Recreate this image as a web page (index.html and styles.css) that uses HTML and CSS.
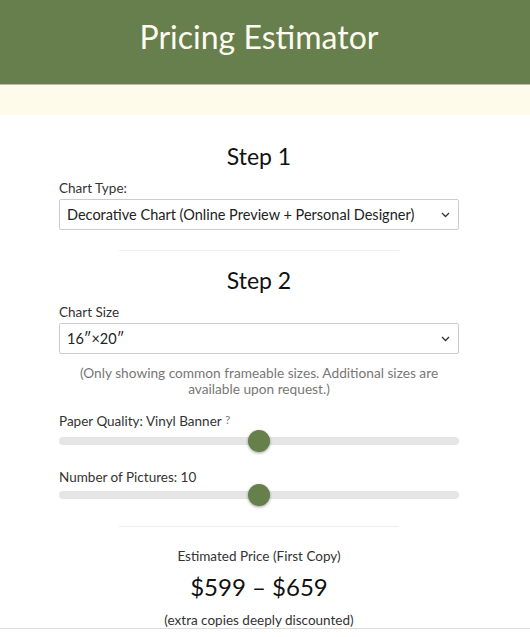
FILE: index.html
```html
<!DOCTYPE html>
<html>
<head>
    <meta charset="UTF-8">
    <meta name="viewport" content="width=device-width, initial-scale=1.0">
    <title>Pricing Estimator</title>
    <link rel="stylesheet" href="styles.css">
</head>
<body>
    <header class="banner">
        <h1>Pricing Estimator</h1>
    </header>
    <div class="notice"></div>

    <main class="estimator">
        <section class="step">
            <h2>Step 1</h2>
            <label class="field-label" for="chart-type">Chart Type:</label>
            <div class="select-wrap">
                <select id="chart-type">
                    <option>Decorative Chart (Online Preview + Personal Designer)</option>
                    <option>Basic Chart</option>
                </select>
                <svg class="chevron" width="9" height="6" viewBox="0 0 9 6"><path d="M1 1l3.5 3.5L8 1" fill="none" stroke="#333" stroke-width="1.3"/></svg>
            </div>
        </section>

        <hr class="divider">

        <section class="step">
            <h2 class="step-two">Step 2</h2>
            <label class="field-label" for="chart-size">Chart Size</label>
            <div class="select-wrap">
                <select id="chart-size">
                    <option>16″×20″</option>
                    <option>18″×24″</option>
                    <option>24″×36″</option>
                </select>
                <svg class="chevron" width="9" height="6" viewBox="0 0 9 6"><path d="M1 1l3.5 3.5L8 1" fill="none" stroke="#333" stroke-width="1.3"/></svg>
            </div>
            <p class="note">(Only showing common frameable sizes. Additional sizes are available upon request.)</p>

            <div class="slider">
                <label class="field-label" for="paper">Paper Quality: <span id="paper-name">Vinyl Banner</span> <span class="help">?</span></label>
                <input type="range" id="paper" min="0" max="4" value="2">
            </div>

            <div class="slider second">
                <label class="field-label" for="pictures">Number of Pictures: <span id="pictures-count">10</span></label>
                <input type="range" id="pictures" min="0" max="20" value="10">
            </div>
        </section>

        <hr class="divider lower">

        <section class="result">
            <div class="result-label">Estimated Price (First Copy)</div>
            <div class="price">$599 – $659</div>
            <div class="result-note">(extra copies deeply discounted)</div>
        </section>
    </main>
    <div class="footer-line"></div>
</body>
</html>
```

FILE: styles.css
```css
* {
    margin: 0;
    padding: 0;
    box-sizing: border-box;
}

body {
    font-family: 'Lato', 'Liberation Sans', sans-serif;
    color: #222;
    background: #fff;
}

.banner {
    height: 85px;
    background: #677e4d;
    border-bottom: 1px solid #c8b9a6;
    padding-right: 12px;
    display: flex;
    justify-content: center;
    align-items: center;
}

.banner h1 {
    color: #fdfbef;
    font-weight: 400;
    font-size: 32px;
    padding-bottom: 12px;
}

.notice {
    height: 30px;
    background: #fffbeb;
}

.estimator {
    width: 400px;
    margin-left: 59px;
}

.step h2 {
    text-align: center;
    font-weight: 400;
    font-size: 23px;
    color: #111;
    margin-top: 27px;
    line-height: 28px;
}

.step h2.step-two {
    margin-top: 15px;
}

.field-label {
    display: block;
    font-size: 13.5px;
    color: #333;
    margin-top: 9px;
    line-height: 18px;
}

.select-wrap {
    position: relative;
    margin-top: 2px;
}

.select-wrap select {
    width: 100%;
    height: 31px;
    border: 1px solid #ccc;
    border-radius: 2px;
    background: #fff;
    font-family: inherit;
    font-size: 14.5px;
    color: #222;
    padding: 0 30px 0 7px;
    -webkit-appearance: none;
    appearance: none;
}

.chevron {
    position: absolute;
    right: 9px;
    top: 13px;
}

.divider {
    width: 280px;
    margin: 20px auto 0;
    border: none;
    border-top: 1px solid #eee;
}

.divider.lower {
    margin-top: 27px;
}

.note {
    text-align: center;
    font-size: 13.7px;
    line-height: 16px;
    color: #777;
    margin-top: 11px;
    padding: 0 8px;
}

.slider .field-label {
    margin-top: 15px;
}

.slider.second .field-label {
    margin-top: 23px;
}

.help {
    font-size: 12px;
    color: #6f8080;
    position: relative;
    top: -2px;
}

.slider input[type="range"] {
    -webkit-appearance: none;
    appearance: none;
    width: 100%;
    height: 8px;
    background: #e5e5e5;
    border-radius: 4px;
    margin-top: 6px;
    display: block;
    outline: none;
}

.slider.second input[type="range"] {
    margin-top: 5px;
}

.slider input[type="range"]::-webkit-slider-thumb {
    -webkit-appearance: none;
    width: 22px;
    height: 22px;
    border-radius: 50%;
    background: #66804b;
    box-shadow: 0 1px 3px rgba(0, 0, 0, 0.4);
    cursor: pointer;
}

.result {
    text-align: center;
    margin-top: 20px;
}

.result-label {
    font-size: 13.5px;
    color: #333;
    line-height: 18px;
}

.price {
    font-size: 24px;
    color: #111;
    margin-top: 7px;
    line-height: 30px;
}

.result-note {
    font-size: 13.5px;
    color: #333;
    margin-top: 10px;
    line-height: 16px;
}

.footer-line {
    border-top: 1px solid #ddd;
}
```
